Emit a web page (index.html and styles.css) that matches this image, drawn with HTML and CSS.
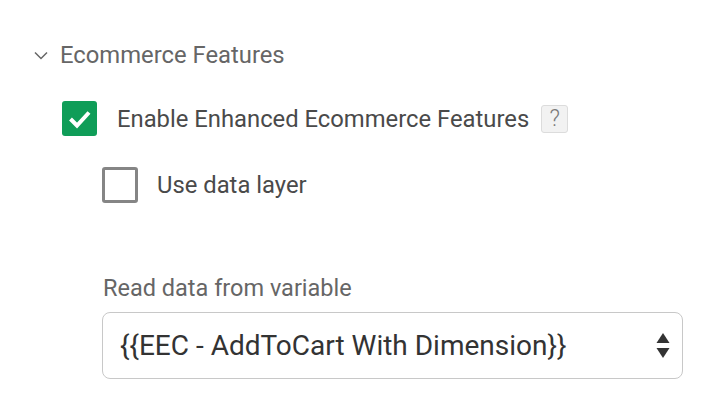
FILE: index.html
```html
<!DOCTYPE html>
<html>
<head>
<meta charset="utf-8">
<link rel="stylesheet" href="styles.css">
</head>
<body>
<div class="panel">
  <div class="header">
    <svg class="chevron" width="14" height="9" viewBox="0 0 14 9"><polyline points="1,1.5 7,7.5 13,1.5" fill="none" stroke="#666" stroke-width="1.5"/></svg>
    <span class="header-text">Ecommerce Features</span>
  </div>
  <div class="check-row row-main">
    <span class="box checked">
      <svg width="35" height="35" viewBox="0 0 35 35"><polyline points="8.5,18 15,24.5 27,11.5" fill="none" stroke="#fff" stroke-width="4"/></svg>
    </span>
    <span class="check-label">Enable Enhanced Ecommerce Features</span>
    <span class="help">?</span>
  </div>
  <div class="check-row row-sub">
    <span class="box unchecked"></span>
    <span class="check-label">Use data layer</span>
  </div>
  <div class="field">
    <div class="field-label">Read data from variable</div>
    <div class="select">
      <span class="select-text">{{EEC - AddToCart With Dimension}}</span>
      <svg class="arrows" width="14" height="26" viewBox="0 0 14 26"><polygon points="7,0 13.5,10 0.5,10" fill="#333"/><polygon points="0.5,15 13.5,15 7,25" fill="#333"/></svg>
    </div>
  </div>
</div>
</body>
</html>
```

FILE: styles.css
```css
html, body {
  margin: 0;
  padding: 0;
  background: #fff;
}
body {
  font-family: Roboto, "Liberation Sans", sans-serif;
  width: 714px;
  height: 414px;
  overflow: hidden;
}
.panel {
  padding: 40px 0 0 34px;
}
.header {
  display: flex;
  align-items: center;
  height: 30px;
}
.chevron {
  display: block;
}
.header-text {
  margin-left: 12px;
  font-size: 23.8px;
  color: #666;
}
.check-row {
  display: flex;
  align-items: center;
}
.row-main {
  margin-top: 31px;
  margin-left: 28px;
  height: 35px;
}
.row-sub {
  margin-top: 31px;
  margin-left: 68px;
  height: 36px;
}
.box {
  box-sizing: border-box;
  display: block;
  flex: none;
  border-radius: 3px;
}
.box.checked {
  width: 35px;
  height: 35px;
  background: #0f9d58;
}
.box svg {
  display: block;
}
.box.unchecked {
  width: 36px;
  height: 36px;
  border: 3px solid #858585;
}
.check-label {
  font-size: 23.8px;
  color: #4a4a4a;
}
.row-main .check-label {
  margin-left: 20px;
}
.row-sub .check-label {
  margin-left: 19px;
}
.help {
  box-sizing: border-box;
  flex: none;
  width: 27px;
  height: 28px;
  margin-left: 12px;
  border: 1px solid #dcdcdc;
  border-radius: 3px;
  background: #f2f2f2;
  color: #7a7a7a;
  font-size: 23px;
  font-weight: 300;
  display: flex;
  align-items: center;
  justify-content: center;
}
.field {
  margin-left: 68px;
  margin-top: 69px;
}
.field-label {
  font-size: 23.5px;
  color: #666;
  height: 32px;
  line-height: 32px;
  padding-left: 1px;
}
.select {
  box-sizing: border-box;
  margin-top: 8px;
  width: 581px;
  height: 67px;
  border: 1.5px solid #c8c8c8;
  border-radius: 8px;
  display: flex;
  align-items: center;
  padding: 0 12px 0 17px;
}
.select-text {
  flex: 1;
  font-size: 28px;
  color: #333;
}
.arrows {
  display: block;
}
```
